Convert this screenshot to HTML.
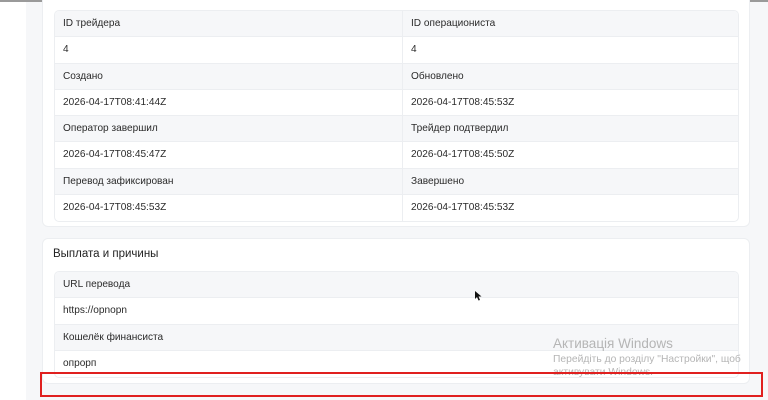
<html><head><style>
body{margin:0;width:768px;height:400px;background:#fff;font-family:"Liberation Sans",sans-serif;font-size:10.1px;color:#2a2a2a;position:relative;overflow:hidden}
.bg{position:absolute;left:26px;top:2px;right:0;bottom:0;background:#f6f7f9}
.top{position:absolute;left:0;top:0;width:768px;height:2px;background:#9a9a9a}
.card{position:absolute;left:42px;width:708px;background:#fff;border-radius:6px;border:1px solid #eceef1;box-sizing:border-box}
.tbl{position:absolute;left:11px;width:685px;border:1px solid #eceef1;border-radius:5px;overflow:hidden;box-sizing:border-box}
.row{display:flex;height:26.25px;border-bottom:1px solid #eceef1;box-sizing:border-box}
.row:last-child{border-bottom:none}
.row div{flex:0 0 347px;padding-left:8px;line-height:25px;box-sizing:border-box}
.row div+div{flex:1;border-left:1px solid #eceef1}
.h{background:#f6f7f9}
.title{position:absolute;left:10px;top:9px;font-size:11.5px;color:#222}
.red{position:absolute;left:40px;top:372px;width:723px;height:25px;border:2px solid #e0201f;box-sizing:border-box}
.win{position:absolute;left:553px;color:#b5b5b5}
</style></head><body>
<div class="top"></div><div class="bg"></div>
<div class="card" style="top:-10px;height:237px">
<div class="tbl" style="top:19px">
<div class="row h"><div>ID трейдера</div><div>ID операциониста</div></div>
<div class="row"><div>4</div><div>4</div></div>
<div class="row h"><div>Создано</div><div>Обновлено</div></div>
<div class="row"><div>2026-04-17T08:41:44Z</div><div>2026-04-17T08:45:53Z</div></div>
<div class="row h"><div>Оператор завершил</div><div>Трейдер подтвердил</div></div>
<div class="row"><div>2026-04-17T08:45:47Z</div><div>2026-04-17T08:45:50Z</div></div>
<div class="row h"><div>Перевод зафиксирован</div><div>Завершено</div></div>
<div class="row"><div>2026-04-17T08:45:53Z</div><div>2026-04-17T08:45:53Z</div></div>
</div></div>
<div class="card" style="top:238px;height:146px">
<div class="title">Выплата и причины</div>
<div class="tbl" style="top:32px">
<div class="row h"><div style="flex:1">URL перевода</div></div>
<div class="row"><div style="flex:1">https://opnopn</div></div>
<div class="row h"><div style="flex:1">Кошелёк финансиста</div></div>
<div class="row"><div style="flex:1">опрорп</div></div>
</div></div>
<div class="win" style="top:336px;font-size:13.5px">Активація Windows</div>
<div class="win" style="top:354px;font-size:10.3px">Перейдіть до розділу "Настройки", щоб</div>
<div class="win" style="top:367px;font-size:10.3px">активувати Windows.</div>
<svg style="position:absolute;left:475px;top:291px" width="7" height="10" viewBox="0 0 7 10"><path d="M0 0L0 8L2 6L3.5 9.5L5 9L3.5 5.5L6.5 5.5Z" fill="#111"/></svg>
<div class="red"></div>
</body></html>
